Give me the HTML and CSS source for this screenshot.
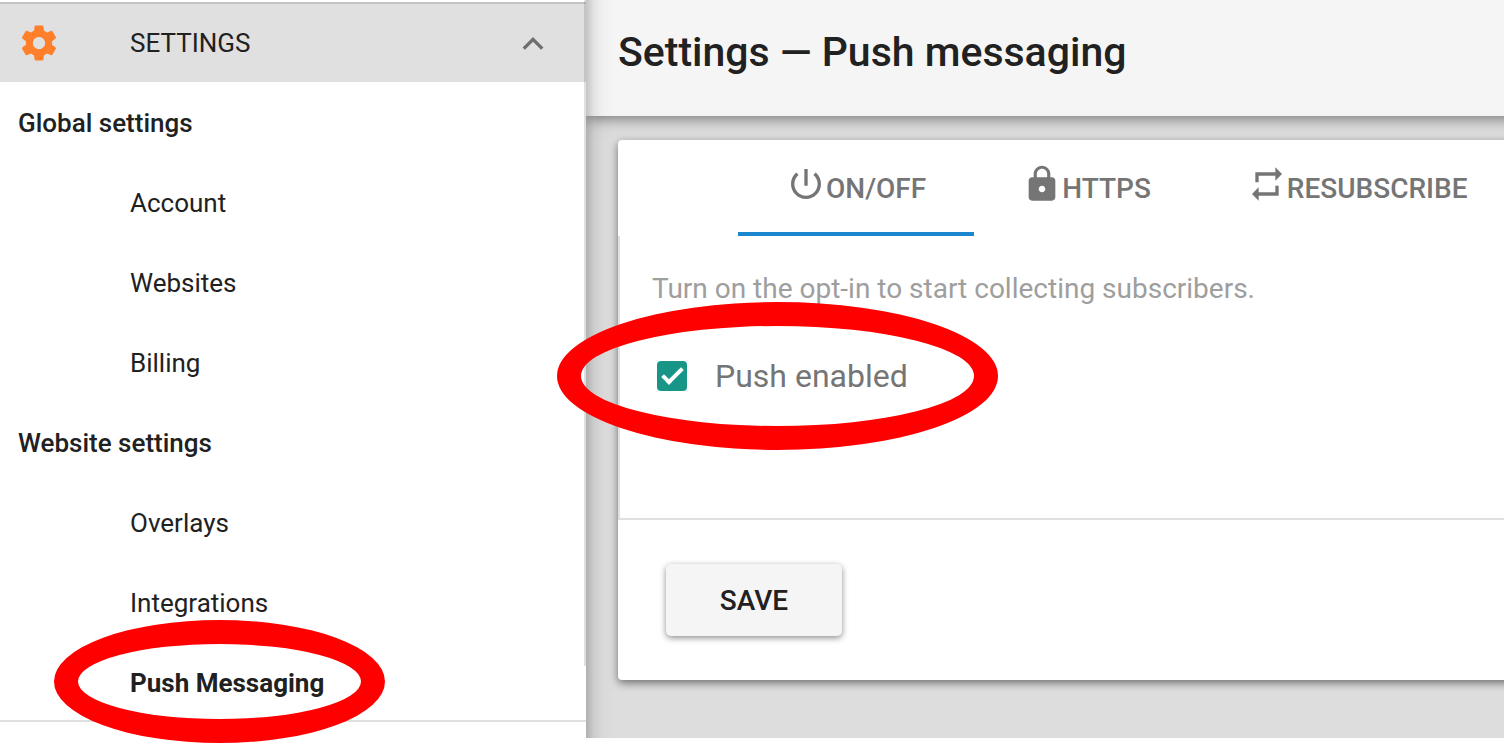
FILE: index.html
```
<!DOCTYPE html>
<html lang="en">
<head>
    <meta charset="UTF-8">
    <meta name="viewport" content="width=device-width, initial-scale=1.0">
    <title>Settings — Push messaging</title>
    <link rel="stylesheet" href="styles.css">
</head>
<body>
    <div class="layout">
        <!-- Sidebar -->
        <nav class="sidebar">
            <button type="button" class="menu-toggle" aria-expanded="true">
                <svg class="gear" viewBox="0 0 24 24" aria-hidden="true"><path d="M19.43 12.98c.04-.32.07-.64.07-.98s-.03-.66-.07-.98l2.11-1.65c.19-.15.24-.42.12-.64l-2-3.46c-.12-.22-.39-.3-.61-.22l-2.49 1c-.52-.4-1.08-.73-1.69-.98l-.38-2.65C14.46 2.18 14.25 2 14 2h-4c-.25 0-.46.18-.49.42l-.38 2.65c-.61.25-1.17.59-1.69.98l-2.49-1c-.23-.09-.49 0-.61.22l-2 3.46c-.13.22-.07.49.12.64l2.11 1.65c-.04.32-.07.65-.07.98s.03.66.07.98l-2.11 1.65c-.19.15-.24.42-.12.64l2 3.46c.12.22.39.3.61.22l2.49-1c.52.4 1.08.73 1.69.98l.38 2.65c.03.24.24.42.49.42h4c.25 0 .46-.18.49-.42l.38-2.65c.61-.25 1.17-.59 1.69-.98l2.49 1c.23.09.49 0 .61-.22l2-3.46c.12-.22.07-.49-.12-.64l-2.11-1.65zM12 15.5c-1.93 0-3.5-1.57-3.5-3.5s1.57-3.5 3.5-3.5 3.5 1.57 3.5 3.5-1.57 3.5-3.5 3.5z"/></svg>
                <span class="menu-label">SETTINGS</span>
                <svg class="chevron" viewBox="0 0 24 24" aria-hidden="true"><path d="M12 8.5l-6 6 1.41 1.41L12 11.33l4.59 4.58L18 14.5z"/></svg>
            </button>
            <ul class="menu">
                <li class="menu-heading">Global settings</li>
                <li><a href="#">Account</a></li>
                <li><a href="#">Websites</a></li>
                <li><a href="#">Billing</a></li>
                <li class="menu-heading">Website settings</li>
                <li><a href="#">Overlays</a></li>
                <li><a href="#">Integrations</a></li>
                <li class="active"><a href="#">Push Messaging</a><span class="ring ring-menu"></span></li>
            </ul>
        </nav>

        <!-- Content -->
        <main class="content">
            <header class="toolbar">
                <h1>Settings — Push messaging</h1>
            </header>

            <form class="card">
                <div class="tabs" role="tablist">
                    <button type="button" class="tab selected" role="tab" aria-selected="true">
                        <svg viewBox="0 0 24 24" aria-hidden="true"><path d="M13 3h-2v10h2V3zm4.83 2.17l-1.42 1.42C17.99 7.86 19 9.81 19 12c0 3.87-3.13 7-7 7s-7-3.13-7-7c0-2.19 1.01-4.14 2.58-5.42L6.17 5.17C4.23 6.82 3 9.26 3 12c0 4.97 4.03 9 9 9s9-4.03 9-9c0-2.74-1.23-5.18-3.17-6.83z"/></svg>
                        <span>ON/OFF</span>
                    </button>
                    <button type="button" class="tab" role="tab" aria-selected="false">
                        <svg viewBox="0 0 24 24" aria-hidden="true"><path d="M18 8h-1V6c0-2.76-2.24-5-5-5S7 3.24 7 6v2H6c-1.1 0-2 .9-2 2v10c0 1.1.9 2 2 2h12c1.1 0 2-.9 2-2V10c0-1.1-.9-2-2-2zm-6 9c-1.1 0-2-.9-2-2s.9-2 2-2 2 .9 2 2-.9 2-2 2zm3.1-9H8.9V6c0-1.71 1.39-3.1 3.1-3.1s3.1 1.39 3.1 3.1v2z"/></svg>
                        <span>HTTPS</span>
                    </button>
                    <button type="button" class="tab" role="tab" aria-selected="false">
                        <svg viewBox="0 0 24 24" aria-hidden="true"><path d="M5 5h12V2l4 4-4 4V7H7v4H5V5zM19 19H7v3l-4-4 4-4v3h10v-4h2z"/></svg>
                        <span>RESUBSCRIBE</span>
                    </button>
                </div>

                <div class="panel">
                    <p>Turn on the opt-in to start collecting subscribers.</p>
                    <div class="field">
                        <input type="checkbox" id="push" checked>
                        <label for="push">Push enabled</label>
                        <span class="ring ring-field"></span>
                    </div>
                </div>

                <div class="actions">
                    <button type="button" class="save-btn">SAVE</button>
                </div>
            </form>
        </main>
    </div>
</body>
</html>
```

FILE: styles.css
```
* {
    box-sizing: border-box;
}

body {
    margin: 0;
    padding-bottom: 9px;
    background-color: #fff;
    color: #212121;
    font-family: Roboto, "Liberation Sans", sans-serif;
    font-size: 26px;
    overflow-x: hidden;
}

button {
    border: none;
    font-family: inherit;
    cursor: pointer;
}

.layout {
    display: flex;
}

/* Sidebar */
.sidebar {
    position: relative;
    z-index: 1;
    flex: 0 0 586px;
    padding: 2px 0 16px;
    background-color: #fff;
}

.sidebar::after {
    content: "";
    position: absolute;
    top: 0;
    right: 0;
    bottom: 72px;
    width: 2px;
    background-color: rgba(0, 0, 0, 0.12);
}

.menu-toggle {
    display: flex;
    align-items: center;
    width: 100%;
    height: 80px;
    padding: 0 32px 0 18px;
    border-top: 2px solid #c4c4c4;
    background-color: #e0e0e0;
    color: #212121;
    font-size: 26px;
}

.menu-label {
    flex: 1;
    margin-left: 70px;
    text-align: left;
}

.gear {
    width: 42px;
    height: 42px;
    fill: #ff7f2a;
}

.chevron {
    width: 42px;
    height: 42px;
    fill: #6e6e6e;
}

.menu {
    margin: 0;
    padding: 0;
    border-bottom: 2px solid #e0e0e0;
    list-style: none;
}

.menu li {
    position: relative;
    height: 80px;
    padding-left: 130px;
    line-height: 82px;
}

.menu li:last-child {
    height: 78px;
}

.menu a {
    color: inherit;
    text-decoration: none;
}

.menu .menu-heading {
    padding-left: 18px;
    font-weight: 500;
}

.menu .active {
    font-weight: 700;
}

/* Content */
.content {
    position: relative;
    flex: 1;
    min-width: 0;
    background-color: #ddd;
}

/* shade cast by the sidebar */
.content::before {
    content: "";
    position: absolute;
    z-index: 1;
    top: 0;
    bottom: 0;
    left: 0;
    width: 28px;
    background: linear-gradient(to right, rgba(0, 0, 0, 0.2), rgba(0, 0, 0, 0.07) 30%, rgba(0, 0, 0, 0.02) 60%, transparent);
}

/* the toolbar and the card run on past the right edge of the window */
.toolbar {
    display: flex;
    align-items: center;
    height: 116px;
    margin-right: -24px;
    padding: 0 32px 12px;
    background-color: #f5f5f5;
    box-shadow: 0 2px 14px rgba(0, 0, 0, 0.5);
}

.toolbar h1 {
    margin: 0;
    font-size: 41px;
    font-weight: 500;
    white-space: nowrap;
}

.card {
    margin: 24px -24px 0 32px;
    border-radius: 4px;
    background-color: #fff;
    box-shadow: 0 3px 8px rgba(0, 0, 0, 0.5);
}

.tabs {
    display: flex;
    height: 96px;
    padding-left: 120px;
    overflow: hidden;
}

.tab {
    display: flex;
    flex: 0 0 auto;
    align-items: center;
    padding: 4px 48px 0;
    border-bottom: 4px solid transparent;
    background: none;
    color: #757575;
    font-size: 28px;
    font-weight: 500;
}

.tab.selected {
    border-bottom-color: #1a87d0;
}

.tab svg {
    width: 40px;
    height: 40px;
    margin-bottom: 8px;
    fill: currentColor;
}

.panel {
    height: 284px;
    padding: 33px 32px;
    border-bottom: 2px solid #e0e0e0;
    border-left: 2px solid #e0e0e0;
}

.panel p {
    margin: 0;
    color: #9e9e9e;
    font-size: 28px;
    line-height: 40px;
    white-space: nowrap;
}

.field {
    position: relative;
    display: flex;
    align-items: center;
    gap: 28px;
    margin-top: 46px;
    padding-left: 5px;
    color: #757575;
    font-size: 32px;
    line-height: 42px;
}

.field input {
    position: relative;
    width: 30px;
    height: 30px;
    margin: 0;
    border-radius: 4px;
    appearance: none;
}

.field input:not(:checked) {
    border: 4px solid #757575;
}

.field input:checked {
    background-color: #179688;
}

/* tick */
.field input:checked::before {
    content: "";
    position: absolute;
    top: 2px;
    left: 10px;
    width: 7px;
    height: 17px;
    border: solid #fff;
    border-width: 0 4px 4px 0;
    transform: rotate(45deg);
}

.actions {
    padding: 44px 48px;
}

.save-btn {
    display: block;
    min-width: 176px;
    height: 72px;
    border-radius: 5px;
    background-color: #f5f5f5;
    color: #212121;
    font-size: 28px;
    font-weight: 500;
    box-shadow: 0 2px 6px rgba(0, 0, 0, 0.45);
}

/* Highlight rings */
.ring {
    position: absolute;
    z-index: 2;
    border: 24px solid #f00;
    border-radius: 50%;
    pointer-events: none;
}

.ring-menu {
    top: -22px;
    left: 54px;
    width: 331px;
    height: 123px;
}

.ring-field {
    top: -53px;
    left: -95px;
    width: 441px;
    height: 148px;
}
```
